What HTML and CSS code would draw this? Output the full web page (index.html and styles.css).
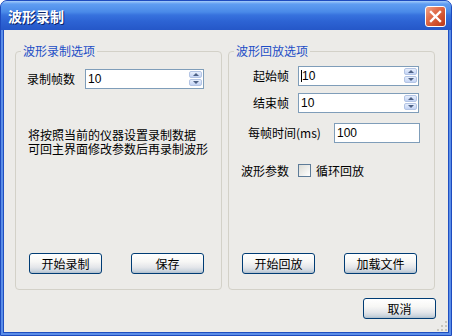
FILE: index.html
```html
<!DOCTYPE html>
<html>
    <head>
        <meta charset="utf-8">
        <link rel="stylesheet" href="styles.css">
    </head>
    <body>
        <div class="window">
            <div class="titlebar">
                <span class="title">波形录制</span>
                <button class="close">
                    <svg width="13" height="13" viewBox="0 0 13 13"><path d="M2 2 L11 11 M11 2 L2 11" stroke="#fff" stroke-width="2.4" stroke-linecap="square"/></svg>
                </button>
            </div>
            <div class="client">
                <div class="groups">
                    <fieldset class="group">
                        <legend>波形录制选项</legend>
                        <div class="row rec-row">
                            <label class="lbl rec-lbl">录制帧数</label>
                            <div class="spin rec-spin">
                                <span class="val">10</span>
                                <div class="arrows">
                                    <span class="arrow up"></span>
                                    <span class="arrow down"></span>
                                </div>
                            </div>
                        </div>
                        <div class="note">
                            <div class="note-line">将按照当前的仪器设置录制数据</div>
                            <div class="note-line">可回主界面修改参数后再录制波形</div>
                        </div>
                        <div class="btn-row">
                            <button class="btn">开始录制</button>
                            <button class="btn">保存</button>
                        </div>
                    </fieldset>
                    <fieldset class="group">
                        <legend>波形回放选项</legend>
                        <div class="row start-row">
                            <label class="lbl short-lbl">起始帧</label>
                            <div class="spin play-spin">
                                <span class="val"><span class="caret"></span>10</span>
                                <div class="arrows">
                                    <span class="arrow up"></span>
                                    <span class="arrow down"></span>
                                </div>
                            </div>
                        </div>
                        <div class="row end-row">
                            <label class="lbl short-lbl">结束帧</label>
                            <div class="spin play-spin">
                                <span class="val">10</span>
                                <div class="arrows">
                                    <span class="arrow up"></span>
                                    <span class="arrow down"></span>
                                </div>
                            </div>
                        </div>
                        <div class="row time-row">
                            <label class="lbl time-lbl">每帧时间(ms)</label>
                            <div class="textbox"><span class="val">100</span></div>
                        </div>
                        <div class="row param-row">
                            <label class="lbl param-lbl">波形参数</label>
                            <span class="check"></span>
                            <span class="check-text">循环回放</span>
                        </div>
                        <div class="btn-row play-btns">
                            <button class="btn">开始回放</button>
                            <button class="btn">加载文件</button>
                        </div>
                    </fieldset>
                </div>
                <div class="footer">
                    <button class="btn">取消</button>
                </div>
                <svg class="grip" width="10" height="10" viewBox="0 0 10 10">
                    <rect x="8" y="0" width="2" height="2" fill="#c8c6bd"/>
                    <rect x="4" y="4" width="2" height="2" fill="#c8c6bd"/>
                    <rect x="8" y="4" width="2" height="2" fill="#c8c6bd"/>
                    <rect x="0" y="8" width="2" height="2" fill="#c8c6bd"/>
                    <rect x="4" y="8" width="2" height="2" fill="#c8c6bd"/>
                    <rect x="8" y="8" width="2" height="2" fill="#c8c6bd"/>
                </svg>
            </div>
        </div>
    </body>
</html>
```

FILE: styles.css
```css
body {
    margin: 0;
    background: #ffffff;
    font-family: "Noto Sans CJK SC", "Liberation Sans", sans-serif;
    font-size: 12px;
}

.window {
    width: 452px;
    height: 336px;
    box-sizing: border-box;
    border: 1px solid #1d4bbf;
    border-radius: 7px 7px 0 0;
    background: #5a8de8;
    padding: 0 2px 2px 2px;
    display: flex;
    flex-direction: column;
}

.titlebar {
    height: 29px;
    margin: 0 -2px;
    border-radius: 6px 6px 0 0;
    background: linear-gradient(to bottom, #a4ccfa 0px, #5f9df2 3px, #4a8ae8 11px, #3772de 14px, #2d64d4 20px, #2557c8 29px);
    display: flex;
    align-items: center;
}

.title {
    color: #ffffff;
    font-weight: bold;
    font-size: 14px;
    line-height: 16px;
    padding-left: 7px;
    text-shadow: 1px 1px 0 #0a246a;
    flex: 1;
}

.close {
    width: 21px;
    height: 21px;
    margin-right: 5px;
    margin-top: 2px;
    padding: 0;
    border: 1px solid #ffffff;
    border-radius: 3px;
    background: linear-gradient(135deg, #f0a58c 0%, #e2714f 35%, #cf4f2c 70%, #b9391a 100%);
    display: flex;
    align-items: center;
    justify-content: center;
}

.client {
    flex: 1;
    position: relative;
    background: #ecebe8;
    border: 1px solid #1f4fc0;
    border-top: none;
    padding: 14px 11px 0 11px;
    display: flex;
    flex-direction: column;
}

.groups {
    display: flex;
    gap: 6px;
}

.group {
    width: 207px;
    height: 246px;
    box-sizing: border-box;
    margin: 0;
    padding: 0;
    border: 1px solid #d3d1c8;
    border-radius: 4px;
}

legend {
    color: #1d4ec6;
    font-size: 12px;
    line-height: 14px;
    padding: 0 2px;
    margin-left: 5px;
}

.row {
    display: flex;
    align-items: center;
}

.lbl {
    line-height: 14px;
    color: #000000;
}

.rec-row {
    margin-top: 11px;
    margin-left: 11px;
}

.rec-lbl {
    width: 58px;
}

.spin,
.textbox {
    height: 20px;
    box-sizing: border-box;
    border: 1px solid #7f9db9;
    background: #ffffff;
    display: flex;
    align-items: flex-start;
}

.rec-spin {
    width: 119px;
}

.play-spin {
    width: 121px;
}

.val {
    flex: 1;
    font-family: "Liberation Sans", sans-serif;
    font-size: 12px;
    line-height: 14px;
    padding: 2px 0 0 2px;
    display: flex;
    align-items: center;
}

.caret {
    width: 1px;
    height: 12px;
    background: #000000;
}

.arrows {
    display: flex;
    flex-direction: column;
    gap: 1px;
    margin: 1px 1px 0 0;
}

.arrow {
    width: 13px;
    height: 7px;
    box-sizing: border-box;
    border: 1px solid #b3c4e4;
    border-radius: 2px;
    background: linear-gradient(to bottom, #e6eefc, #c3d3f4);
    display: flex;
    align-items: center;
    justify-content: center;
}

.arrow::after {
    content: "";
    border-left: 3px solid transparent;
    border-right: 3px solid transparent;
}

.up::after {
    border-bottom: 3px solid #4d6185;
}

.down::after {
    border-top: 3px solid #4d6185;
}

.note {
    margin-top: 39px;
    margin-left: 12px;
    color: #000000;
}

.note-line {
    line-height: 14px;
}

.btn-row {
    display: flex;
    gap: 29px;
    margin-left: 13px;
    margin-top: 97px;
}

.btn {
    width: 73px;
    height: 21px;
    padding: 0;
    border: 1px solid #003c74;
    border-radius: 3px;
    background: linear-gradient(to bottom, #ffffff 0%, #f7f7f5 40%, #e4e6ea 70%, #c9d3dc 90%, #aebdcb 100%);
    font-family: "Noto Sans CJK SC", sans-serif;
    font-size: 12px;
    line-height: 14px;
    color: #000000;
}

.start-row {
    margin-top: 8px;
    margin-left: 24px;
}

.short-lbl {
    width: 45px;
}

.end-row {
    margin-top: 7px;
    margin-left: 24px;
}

.time-row {
    margin-top: 10px;
    margin-left: 19px;
}

.time-lbl {
    width: 86px;
}

.textbox {
    width: 86px;
}

.param-row {
    margin-top: 21px;
    margin-left: 12px;
    height: 13px;
}

.param-lbl {
    width: 57px;
}

.check {
    width: 13px;
    height: 13px;
    box-sizing: border-box;
    border: 1px solid #5d7b98;
    background: linear-gradient(135deg, #dcdcd6, #ffffff);
}

.check-text {
    margin-left: 5px;
    line-height: 14px;
}

.play-btns {
    margin-top: 76px;
}

.footer {
    display: flex;
    justify-content: flex-end;
    margin-top: 8px;
    padding-right: 1px;
}

.grip {
    position: absolute;
    right: 1px;
    bottom: 1px;
}
```
